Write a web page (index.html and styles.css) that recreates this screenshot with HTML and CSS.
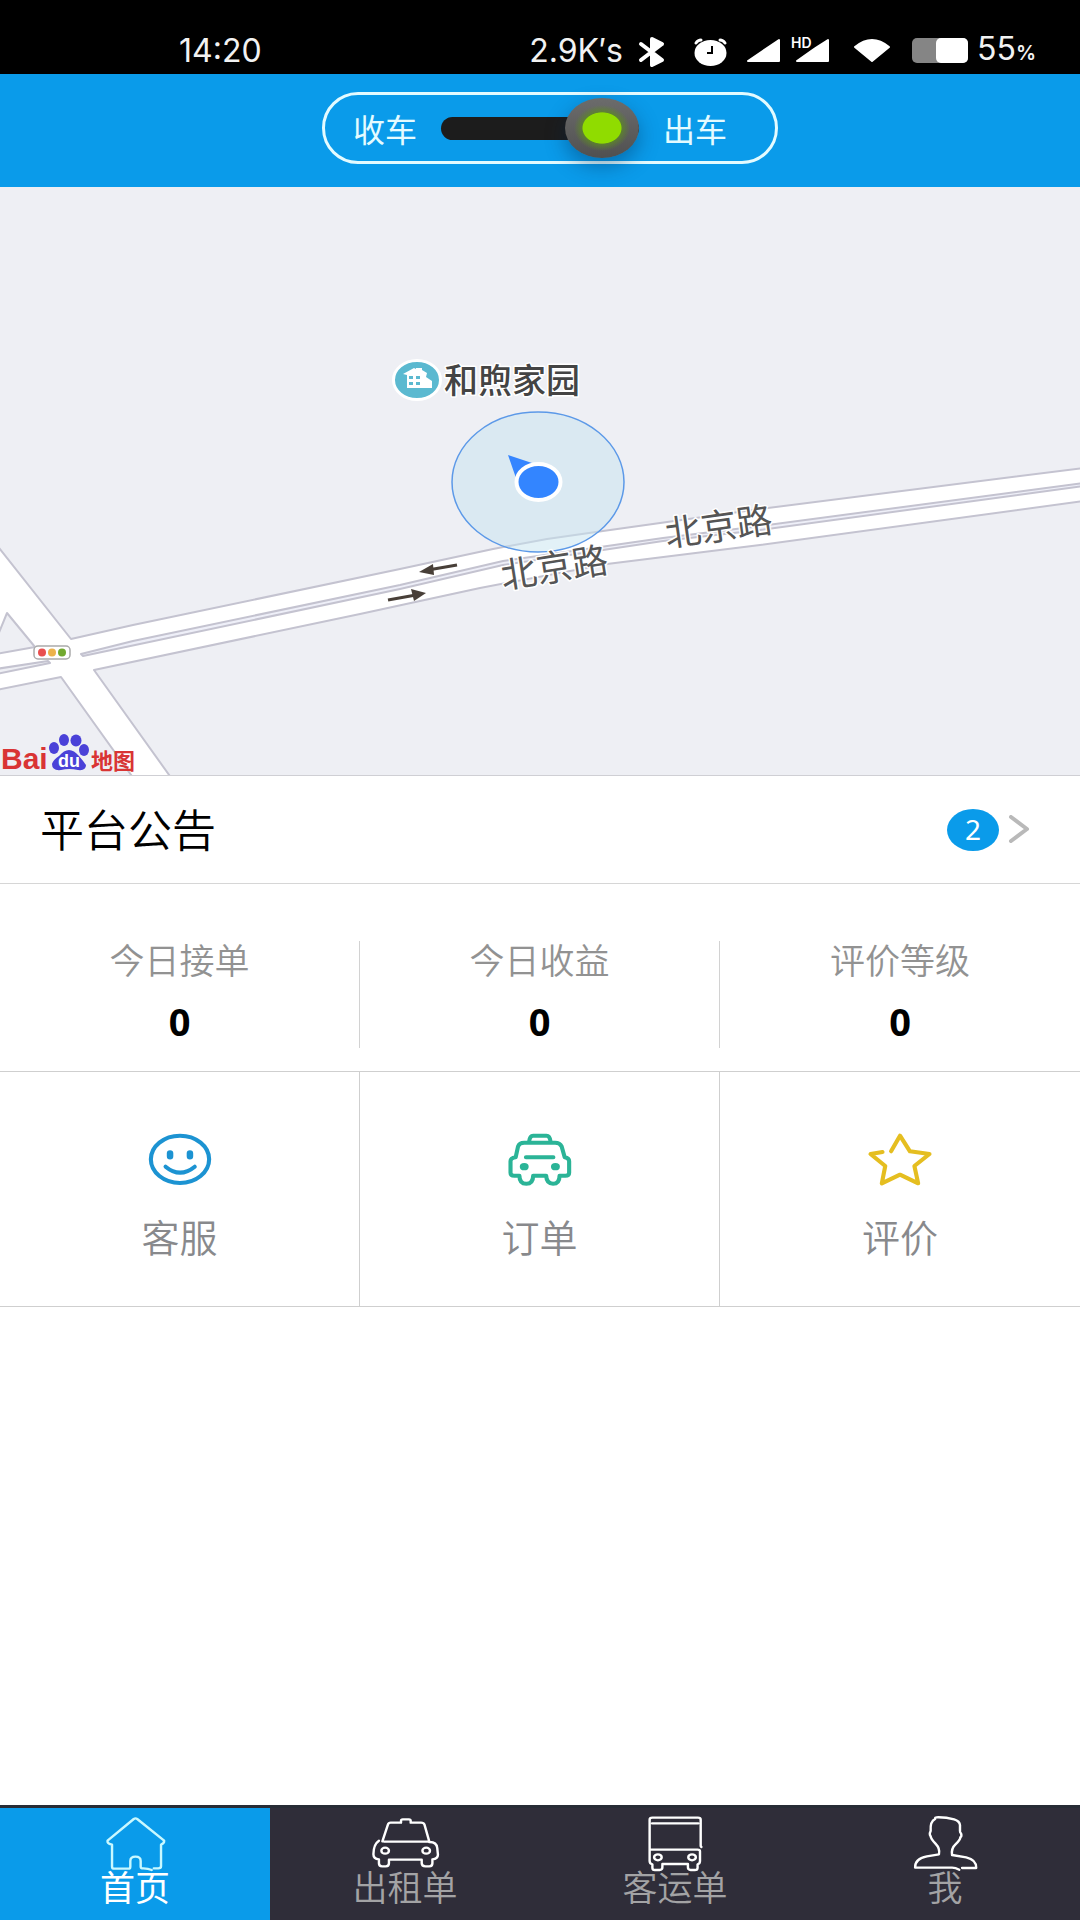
FILE: index.html
```html
<!DOCTYPE html>
<html lang="zh-CN">
<head>
<meta charset="utf-8">
<meta name="viewport" content="width=device-width, initial-scale=1">
<title>首页</title>
<link rel="stylesheet" href="styles.css">
</head>
<body>
<div class="status">
  <span class="status-text">14:20</span>
  <div class="status-right">
    <span class="status-text status-speed">2.9K′s</span>
    <svg width="58" height="44" viewBox="630 30 58 44" aria-hidden="true"><path d="M640 44L661 60L651 65V39L661 44L640 60" fill="none" stroke="#fff" stroke-width="4" stroke-linecap="round" stroke-linejoin="round"/><path d="M651 39l10 5-10 8zM651 65l10-5-10-8z" fill="#fff"/></svg>
    <svg width="50" height="44" viewBox="688 30 50 44" aria-hidden="true"><ellipse cx="709.500" cy="53" rx="16" ry="13" fill="#fff"/><path d="M695 43q2-3 5-3M719 40q3 0 5 3" fill="none" stroke="#fff" stroke-width="3" stroke-linecap="round"/><path d="M711 46v7h-5" fill="none" stroke="#000" stroke-width="2"/></svg>
    <svg width="48" height="44" viewBox="738 30 48 44" aria-hidden="true"><path d="M778 40v21h-31z" fill="#fff" stroke="#fff" stroke-width="2" stroke-linejoin="round"/></svg>
    <svg width="58" height="44" viewBox="786 30 58 44" aria-hidden="true"><path d="M827 40v21h-31l17-12 3-2z" fill="#fff" stroke="#fff" stroke-width="2" stroke-linejoin="round"/><text class="hd" x="790" y="48">HD</text></svg>
    <svg width="58" height="44" viewBox="844 30 58 44" aria-hidden="true"><path d="M854 47q17-14 34 0l-17 14z" fill="#fff" stroke="#fff" stroke-width="2" stroke-linejoin="round"/></svg>
    <svg width="74" height="44" viewBox="902 30 74 44" aria-hidden="true"><rect x="911" y="38" width="56" height="25" rx="5" fill="#858585"/><rect x="935" y="38" width="32" height="25" rx="5" fill="#fff"/></svg>
    <span class="status-text">55<small class="percent">%</small></span>
  </div>
</div>

<header class="header">
  <label class="duty">
    <span>收车</span>
    <input class="duty-switch" type="checkbox" role="switch" checked>
    <span>出车</span>
  </label>
</header>

<main class="main">
  <svg class="map" viewBox="0 187 1080 588" role="img" aria-label="地图">
    <rect y="187" width="1080" height="588" fill="#eeeff4"/>
    <g fill="#fff" stroke="#c4c3d0" stroke-width="2" stroke-linejoin="round">
      <path d="M-4 654L35 647L7 613L-4 640V544L71 639L133 625L400 569L493 549L547 539L603 531L760 509L1084 468V501L760 545L607 564L480 588L360 614L94 670L172 779H134L61 677L-4 690Z"/>
      <path d="M81 654L133 641L400 585L503 561L663 538L760 526L1084 483V486L760 530L663 541L503 565L400 589L83 656Z" fill="#eeeff8"/>
      <path d="M-4 669L48 661L50 663L-4 674Z" fill="#eeeff4"/>
    </g>
    <g fill="#483f38" stroke="#483f38">
      <path d="M457 565L428 570" stroke-width="3"/><path d="M419 572l14-8 1 11z" stroke="none"/>
      <path d="M388 600L416 595" stroke-width="3"/><path d="M426 593l-15-4 3 12z" stroke="none"/>
    </g>
    <rect x="34" y="646" width="36" height="13" rx="4" fill="#fff" stroke="#aaa" stroke-width="1.500"/>
    <circle cx="42" cy="652.500" r="4" fill="#e9504f"/><circle cx="52" cy="652.500" r="4" fill="#ecb24c"/><circle cx="62" cy="652.500" r="4" fill="#72a92f"/>

    <ellipse cx="417" cy="380" rx="23.500" ry="19.500" fill="#5bb9d0" stroke="#fff" stroke-width="3"/>
    <path d="M403 374l11-6 2 1v-1h6v2l5 3-1 4 6 4v7h-25v-13zM409 376v3h4v-3zM416 376v3h4v-3zM409 382v3h4v-3zM416 382v3h4v-3z" fill="#fff" fill-rule="evenodd"/>
    <text class="place" x="444" y="393">和煦家园</text>

    <ellipse cx="538" cy="482" rx="86" ry="70" fill="#c5e3ef" fill-opacity="0.500" stroke="#5c99e8" stroke-width="1.500"/>
    <path d="M508 455l27 9-19 14z" fill="#3585ff"/>
    <ellipse cx="538.500" cy="482" rx="22" ry="18" fill="#3385ff" stroke="#fff" stroke-width="4"/>
    <text class="road" x="503" y="589" transform="rotate(-9 503 589)">北京路</text>
    <text class="road" x="667" y="547" transform="rotate(-8 667 547)">北京路</text>

    <text class="logo" x="1" y="769" font-size="30">Bai</text>
    <g fill="#4a41d8">
      <ellipse cx="54" cy="748" rx="5" ry="6"/><ellipse cx="64" cy="740" rx="5" ry="6"/><ellipse cx="76" cy="740.500" rx="5.500" ry="6"/><ellipse cx="84" cy="750" rx="5" ry="6"/>
      <path d="M69 750q5 0 10 6t7 9q0 6-8 5q-9-2-17 0q-9 1-9-6q1-4 7-8q5-6 10-6z"/>
    </g>
    <text class="logo logo-du" x="58" y="767" font-size="18">du</text>
    <text class="logo" x="91" y="769" font-size="22">地图</text>
  </svg>

  <a class="notice" href="#notice">
    <span class="notice-title">平台公告</span>
    <span class="badge">2</span>
    <svg width="22" height="30" viewBox="0 0 22 30" aria-hidden="true"><path d="M3 2l16 12L3 26" fill="none" stroke="#b9b9b9" stroke-width="4" stroke-linecap="round" stroke-linejoin="round"/></svg>
  </a>

  <dl class="stats">
    <div class="stat"><dt>今日接单</dt><dd>0</dd></div>
    <div class="stat"><dt>今日收益</dt><dd>0</dd></div>
    <div class="stat"><dt>评价等级</dt><dd>0</dd></div>
  </dl>

  <nav class="actions">
    <a class="action" href="#service">
      <svg class="action-icon" viewBox="181 210 210 180" preserveAspectRatio="none" aria-hidden="true" fill="none" stroke="#1c93d2" stroke-width="12" stroke-linecap="round"><ellipse cx="286" cy="298" rx="85" ry="71"/><path d="M244 320q42 36 85 0"/><path d="M257 280v9M315 280v9" stroke-width="19"/></svg>
      <span>客服</span>
    </a>
    <a class="action" href="#orders">
      <svg class="action-icon" viewBox="1230 210 210 180" preserveAspectRatio="none" aria-hidden="true" fill="none" stroke="#2bb497" stroke-width="12" stroke-linecap="round" stroke-linejoin="round"><path d="M1264 292l7-33q4-11 18-11h90q14 0 19 11l9 33q13 2 13 12v34q0 9-11 9h-17q0 24-19 24t-20-24h-38q0 24-20 24t-20-24h-15q-11 0-11-9v-34q0-10 15-12zM1303 246q2-19 12-19h39q10 0 12 19M1294 292h80"/><g fill="#2bb497" stroke="none"><ellipse cx="1289" cy="320" rx="13" ry="11"/><ellipse cx="1380" cy="320" rx="13" ry="11"/></g></svg>
      <span>订单</span>
    </a>
    <a class="action" href="#reviews">
      <svg class="action-icon" viewBox="941 210 210 180" preserveAspectRatio="none" aria-hidden="true" fill="none" stroke="#e5be20" stroke-width="12" stroke-linecap="round" stroke-linejoin="round"><path d="M1020 274l26-47 29 47 57 8-44 36 11 52-53-26-53 26 10-52-43-36 35-6"/></svg>
      <span>评价</span>
    </a>
  </nav>
</main>

<nav class="tabs">
  <a class="tab tab-active" href="#home" aria-current="page">
    <svg class="tab-icon" viewBox="288 72 200 174" preserveAspectRatio="none" aria-hidden="true"><path d="M441 235h13q8 0 8-6v-65q10-4 9-12l-78-65q-5-4-10 0l-76 65q-2 8 13 12v66q0 6 7 6h40q6 0 6-6v-17q0-13 15-13t15 13v17q0 5 8 5 14 0 24 5"/></svg>
    <span>首页</span>
  </a>
  <a class="tab" href="#taxi">
    <svg class="tab-icon" viewBox="1072 72 200 174" preserveAspectRatio="none" aria-hidden="true"><path d="M1105 154l16-50q2-6 8-6h30v-6q0-4 5-4h18q5 0 5 4v6h30q8 0 10 6l14 51h-130M1240 156q22-1 24 18l2 20q0 12-16 14v12q0 9-9 9h-11q-11 0-11-9v-11h-95v11q0 9-9 9h-11q-9 0-9-9v-12q-16-1-16-15 0-30 16-41"/><ellipse cx="1113" cy="182" rx="11" ry="9"/><ellipse cx="1232" cy="182" rx="11" ry="9"/></svg>
    <span>出租单</span>
  </a>
  <a class="tab" href="#bus">
    <svg class="tab-icon" viewBox="290 72 200 174" preserveAspectRatio="none" aria-hidden="true"><path d="M465 171l-2-3v-79q0-6-8-6h-132q-8 0-8 6v124q0 8 8 10v10q0 7 7 7h14q8 0 8-8v-10h74v10q0 8 8 8h12q8 0 8-7v-10q7-2 7-10v-29q0-5-7-5h-138M322 100h134"/><ellipse cx="339" cy="202" rx="11" ry="9"/><ellipse cx="438" cy="202" rx="11" ry="9"/></svg>
    <span>客运单</span>
  </a>
  <a class="tab" href="#me">
    <svg class="tab-icon" viewBox="1080 72 200 174" preserveAspectRatio="none" aria-hidden="true"><path d="M1228 234h41q1-25-29-32l-41-7q-3-20 10-32 14-13 14-21 5-3 2-12-3-1-3-7v-18q-1-12-17-17-25-7-52-6-4 0-3 5-15 7-13 36-5 8 0 16 0 7 14 22 14 15 10 32l-35 6q-36 8-34 34h107q10 0 21 6"/></svg>
    <span>我</span>
  </a>
</nav>
</body>
</html>
```
FILE: styles.css
```css
* {
  box-sizing: border-box;
}

body {
  margin: 0;
  min-height: 100vh;
  display: flex;
  flex-direction: column;
  background: #fff;
  color: #000;
  font-family: "Noto Sans", "Noto Sans CJK SC", sans-serif;
}

a {
  color: inherit;
  text-decoration: none;
}

svg {
  display: block;
  flex: none;
}

/* Phone status bar */
.status {
  display: flex;
  align-items: center;
  justify-content: space-between;
  height: 74px;
  padding: 28px 44px 0 179px;
  background: #000;
  color: #f2f2f2;
}

.status-right {
  display: flex;
  align-items: center;
}

.status-right svg {
  margin-top: 2px;
}

.status-text {
  font-family: Inter, sans-serif;
  font-size: 32px;
  line-height: 44px;
}

.status-speed {
  margin-right: 8px;
}

.percent {
  font-size: 20px;
  font-weight: 600;
}

.hd {
  fill: #fff;
  font-family: Inter, sans-serif;
  font-size: 14px;
  font-weight: 600;
}

/* Header with the on-duty switch */
.header {
  display: flex;
  justify-content: center;
  padding: 18px 0 23px 20px;
  background: #0a9bea;
}

.duty {
  display: flex;
  align-items: center;
  gap: 24px;
  height: 72px;
  padding: 0 48px 0 28px;
  border: 3px solid #e4fbff;
  border-radius: 36px;
  color: #e4fbff;
  font-size: 32px;
}

.duty-switch {
  appearance: none;
  position: relative;
  width: 198px;
  height: 23px;
  margin: 0;
  border-radius: 12px;
  background: #1c1c1c;
}

.duty-switch::before {
  content: "";
  position: absolute;
  top: -19px;
  left: 0;
  width: 74px;
  height: 60px;
  border-radius: 50%;
  background: radial-gradient(ellipse 20px 16px at center, #90dc00 95%, transparent 100%),
    radial-gradient(ellipse 28px 23px at center, #5d8a24 60%, transparent 100%),
    linear-gradient(#6c6c6c, #505050);
  box-shadow: 0 8px 20px rgba(0, 40, 80, 0.4);
}

.duty-switch:checked::before {
  left: auto;
  right: 0;
}

.main {
  flex: 1;
}

/* Map */
.map {
  width: 100%;
  height: auto;
}

.place,
.road {
  stroke: #fff;
  stroke-width: 3px;
  stroke-linejoin: round;
  paint-order: stroke;
}

.place {
  fill: #444;
  font-size: 34px;
  font-weight: 500;
}

.road {
  fill: #555;
  font-size: 36px;
}

.logo {
  fill: #d93434;
  font-family: "Liberation Sans", "Noto Sans CJK SC", sans-serif;
  font-weight: 700;
}

.logo-du {
  fill: #fff;
}

/* Announcements */
.notice {
  display: flex;
  align-items: center;
  height: 109px;
  padding: 0 50px 0 40px;
  border-top: 1px solid #cfcfd4;
  border-bottom: 1px solid #d6d6d6;
}

.notice-title {
  flex: 1;
  font-size: 44px;
  font-weight: 350;
  line-height: 48px;
}

.badge {
  width: 52px;
  height: 42px;
  margin-right: 9px;
  border-radius: 50%;
  background: #0a9bea;
  color: #fff;
  font-size: 28px;
  line-height: 40px;
  text-align: center;
}

/* Today's figures */
.stats {
  display: grid;
  grid-template-columns: repeat(3, 1fr);
  margin: 0;
  padding: 57px 0 23px;
}

.stat {
  display: flex;
  flex-direction: column;
  gap: 20px;
  padding-bottom: 7px;
  border-right: 1px solid #d2d2d2;
  text-align: center;
  line-height: 40px;
}

.stat:last-child {
  border-right: 0;
}

.stat dt {
  color: #929292;
  font-size: 35px;
  font-weight: 350;
}

.stat dd {
  margin: 0;
  font-size: 38px;
  font-weight: 700;
}

/* Shortcuts */
.actions {
  display: grid;
  grid-template-columns: repeat(3, 1fr);
  border-top: 1px solid #cfcfcf;
  border-bottom: 1px solid #cfcfcf;
}

.action {
  display: flex;
  flex-direction: column;
  align-items: center;
  gap: 25px;
  padding: 58px 0 47px;
  border-right: 1px solid #cfcfcf;
  color: #88898c;
  font-size: 38px;
  font-weight: 350;
  line-height: 44px;
}

.action:last-child {
  border-right: 0;
}

.action-icon {
  width: 72px;
  height: 60px;
}

/* Bottom tabs */
.tabs {
  display: grid;
  grid-template-columns: repeat(4, 1fr);
  border-top: 3px solid #272c35;
  background: #2f2d39;
}

.tab {
  display: flex;
  flex-direction: column;
  align-items: center;
  padding: 6px 0 16px;
  color: #a3a3a5;
  font-size: 35px;
  font-weight: 350;
  line-height: 32px;
}

.tab-active {
  background: #0a9bea;
  color: #fff;
  font-weight: 400;
}

.tab-icon {
  width: 69px;
  height: 58px;
  fill: none;
  stroke: #fff;
  stroke-width: 7px;
  stroke-linecap: round;
  stroke-linejoin: round;
}

.tab-active .tab-icon {
  stroke: #c9f8ff;
}
```
